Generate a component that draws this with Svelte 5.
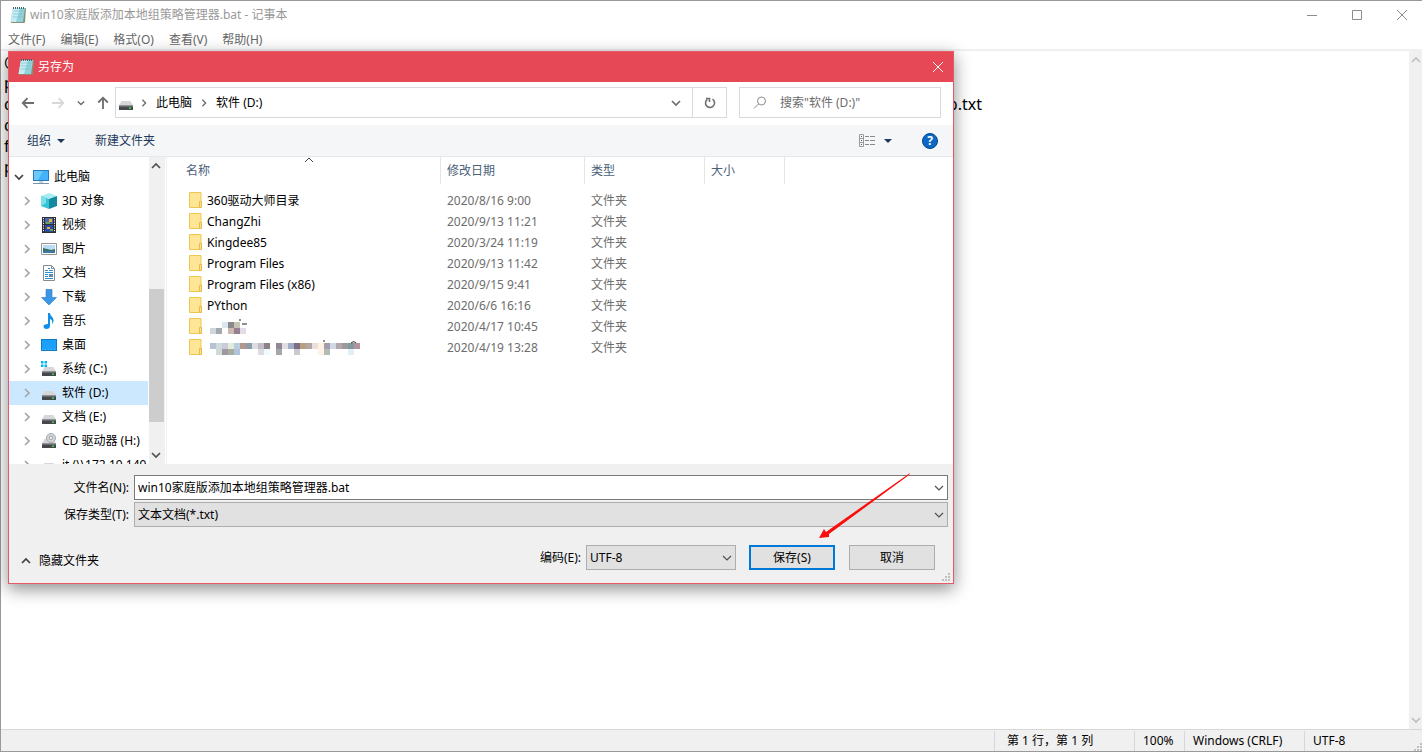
<script>
    let fileName = $state("win10家庭版添加本地组策略管理器.bat");
    let fileType = $state("文本文档(*.txt)");
    let encoding = $state("UTF-8");
    let selected = $state("软件 (D:)");

    const menus = ["文件(F)", "编辑(E)", "格式(O)", "查看(V)", "帮助(H)"];
    const status = ["第 1 行，第 1 列", "100%", "Windows (CRLF)", "UTF-8"];
    const lines = ["@", "p", "d", "d", "f", "p"];

    const places = [
        { icon: "cube", name: "3D 对象" },
        { icon: "video", name: "视频" },
        { icon: "picture", name: "图片" },
        { icon: "doc", name: "文档" },
        { icon: "download", name: "下载" },
        { icon: "music", name: "音乐" },
        { icon: "desktop", name: "桌面" },
        { icon: "system", name: "系统 (C:)" },
        { icon: "drive", name: "软件 (D:)" },
        { icon: "drive", name: "文档 (E:)" },
        { icon: "cd", name: "CD 驱动器 (H:)" },
        { icon: "drive", name: "it (\\\\172.19.149" },
    ];

    // hidden names are drawn as 6px blocks: [column, row, colour]
    const shortMosaic = [
        [0, 1, "#cfd6dc"], [1, 1, "#a3a8ae"], [2, 0, "#dce8f0"], [3, 0, "#8a8a8c"],
        [3, 1, "#cdb8b4"], [4, 0, "#c6c4b4"], [4, 1, "#958090"], [5, 1, "#e2dce8"],
    ];
    const longMosaic = [
        "#b8c4d4", "#d0dcdc", "#cccad8", "#e0ecdc", "#bccce0", "#b0988e", "#8c9caa", "#dedee0", "#c0bcc8", "#8e8288",
        "", "#928896", "#e0e0e4", "#a4acc8", "#7c6e84", "#ba9e7e", "#b0a8a4", "#ecdeda", "#fff2e4", "#a49cac",
        "#d2d8e4", "#b2a8b0", "#9e9a98", "#8498a0", "#b4949c",
    ]
        .map((c, i) => [i, 0, c])
        .filter((b) => b[2])
        .concat([
            [1, 1, "#d2dad8"], [2, 1, "#9c9aa0"], [3, 1, "#a8ac9e"], [4, 1, "#b0c2dc"], [8, 1, "#dedce2"],
            [9, 1, "#f0faff"], [11, 1, "#a4a8a6"], [14, 1, "#cacace"], [18, 1, "#fff2e4"], [19, 1, "#b4bcb4"],
            [23, 1, "#e2f0f6"],
        ]);

    const files = [
        { name: "360驱动大师目录", date: "2020/8/16 9:00" },
        { name: "ChangZhi", date: "2020/9/13 11:21" },
        { name: "Kingdee85", date: "2020/3/24 11:19" },
        { name: "Program Files", date: "2020/9/13 11:42" },
        { name: "Program Files (x86)", date: "2020/9/15 9:41" },
        { name: "PYthon", date: "2020/6/6 16:16" },
        { blocks: shortMosaic, marks: "M29 1h2M32 5h5", date: "2020/4/17 10:45" },
        { blocks: longMosaic, marks: "M113 1h2M141 3q3-3 5 0", date: "2020/4/19 13:28" },
    ];
</script>

{#snippet notepad()}
    <svg class="notepad" viewBox="0 0 16 18" width="16" height="18" aria-hidden="true">
        <path d="M4 2h12l-1 14.500-2 .5H1z" fill="#8f8b70" />
        <path d="M3 2h12l-2 14H0.500z" fill="#8ed3de" />
        <path d="M3 2h7L6 16H0.500z" fill="#c4edf2" />
        <path d="M3.500 5h10M3 8h10M2.500 11h10" stroke="#7cbac6" stroke-width=".6" />
        <path d="M3.500 1v2M5.500 1v2M7.500 1v2M9.500 1v2M11.500 1v2M13.500 1v2" stroke="#41666f" stroke-width="1" />
    </svg>
{/snippet}

{#snippet chevron(dir, size = 10)}
    <svg class="chevron {dir}" viewBox="0 0 10 10" width={size} height={size} aria-hidden="true">
        <path d="M1 3l4 4 4-4" fill="none" stroke="currentColor" stroke-width="var(--stroke, 1.700)" />
    </svg>
{/snippet}

{#snippet resizeGrip()}
    <svg class="grip" viewBox="0 0 8 8" width="8" height="8" aria-hidden="true">
        <path d="M6 0h2v2H6zM3 3h2v2H3zM6 3h2v2H6zM0 6h2v2H0zM3 6h2v2H3zM6 6h2v2H6z" fill="#bfbfbf" />
    </svg>
{/snippet}

{#snippet driveShape()}
    <path d="M3.500 6h9L15 10.500H1z" fill="#d6d7d9" />
    <path d="M1 10.500h14V15H1z" fill="#46494c" />
    <path d="M1 10.500h14v1H1z" fill="#8a8c8f" />
    <path d="M11 12.500h2v1.200h-2z" fill="#3df04a" />
{/snippet}

{#snippet icon(kind)}
    <svg class="icon" viewBox="0 0 16 16" width="16" height="16" aria-hidden="true">
        {#if kind === "pc"}
            <path d="M0 1h16v11H0z" fill="#2a7cb8" />
            <path d="M1 2h14v9H1z" fill="#43b4fb" />
            <path d="M1 2h9L5 11H1z" fill="#6cc8ff" />
            <path d="M6 12h4v2H6z" fill="#c5d3dc" />
            <path d="M0 14.500h16" stroke="#7893a5" />
        {:else if kind === "cube"}
            <path d="M0 3l8-3 8 3-8 3z" fill="#a5edf2" />
            <path d="M0 3l8 3v10l-8-3z" fill="#35c3d6" />
            <path d="M16 3l-8 3v10l8-3z" fill="#12899c" />
            <path d="M0 3l5 2v5l-5 3z" fill="#7bdfe9" />
        {:else if kind === "video"}
            <path d="M1 0h14v16H1z" fill="#2e2e30" />
            <path d="M4 1h8v6H4z" fill="#4a68b8" />
            <path d="M4 8h8v7H4z" fill="#2b4aa5" />
            <path d="M8 2h3v3H8zM6 10h3v2H6z" fill="#e7b33a" />
            <path d="M5 5h4v2H5zM9 12h3v2H9z" fill="#6ba34e" />
            <path d="M2.500 1v14M13.500 1v14" stroke="#f3f3f3" stroke-dasharray="1.200 1.200" />
        {:else if kind === "picture"}
            <path d="M.5 2.500h15v11H.5z" fill="#fff" stroke="#969696" />
            <path d="M2 4h12v8H2z" fill="#b8dcf5" />
            <path d="M2 7l4 1 4 1 4-1v4H2z" fill="#397065" />
            <path d="M2 10h12v2H2z" fill="#3b7ca6" />
        {:else if kind === "doc"}
            <path d="M2.500.5h8l3 3v12h-11z" fill="#fff" stroke="#858b90" />
            <path d="M10.500.5v3h3" fill="none" stroke="#858b90" />
            <path d="M7 3.500h2M4 5.500h3M8 5.500h4M4 7.500h8M4 9.500h3M4 11.500h3M4 13.500h8" stroke="#2e8fd0" />
            <path d="M8 9h4v3H8z" fill="#5d8fb0" />
        {:else if kind === "download"}
            <path d="M5 .5h6v8h4.500L8 16 .5 8.500H5z" fill="#3a96e6" stroke="#2b78c2" stroke-width=".6" />
        {:else if kind === "music"}
            <path d="M7 0h2c0 3 4 4 3.500 8-.2 1.400-.8 2.500-1.500 3 .8-3-.5-4.500-2-5v7c0 2-1.500 3-3.500 3S2.500 15 2.500 13.500 4 11 7 11z" fill="#0f8fe8" />
        {:else if kind === "desktop"}
            <path d="M0 2h16v12H0z" fill="#1277c4" />
            <path d="M1 3h14v10H1z" fill="#1ca0fb" />
            <path d="M1 12.500h14" stroke="#62c1ff" stroke-dasharray="1 2" />
        {:else if kind === "system"}
            {@render driveShape()}
            <path d="M0 0h2.500v2.500H0zM3.500 0H6v2.500H3.500zM0 3.500h2.500V6H0zM3.500 3.500H6V6H3.500z" fill="#00b4ee" />
        {:else if kind === "cd"}
            {@render driveShape()}
            <circle cx="10" cy="5" r="4.600" fill="#d0d3d5" stroke="#94989b" stroke-width=".7" />
            <circle cx="10" cy="5" r="1.600" fill="#fff" stroke="#888" stroke-width=".7" />
        {:else}
            {@render driveShape()}
        {/if}
    </svg>
{/snippet}

{#snippet mosaic(blocks, marks)}
    <svg class="mosaic" viewBox="0 0 150 16" width="150" height="16" role="img" aria-label="文件夹">
        {#each blocks as [col, row, fill]}
            <rect x={col * 6} y={row * 6 + 3} width="6" height="6" {fill} />
        {/each}
        <path d={marks} fill="none" stroke="#222" />
    </svg>
{/snippet}

<div class="window">
    <header class="titlebar">
        {@render notepad()}
        <h1>{fileName} - 记事本</h1>
        <div class="controls">
            <button aria-label="最小化"><svg viewBox="0 0 10 10" width="10" height="10"><path d="M0 5.500h10" /></svg></button>
            <button aria-label="最大化"><svg viewBox="0 0 10 10" width="10" height="10"><path d="M.5.5h9v9h-9z" /></svg></button>
            <button aria-label="关闭"><svg viewBox="0 0 10 10" width="10" height="10"><path d="M0 0l10 10M10 0L0 10" /></svg></button>
        </div>
    </header>

    <nav class="menubar">
        {#each menus as menu}
            <button>{menu}</button>
        {/each}
    </nav>

    <main class="workspace">
        <div class="editor">
            {#each lines as line, i}
                <p>
                    <span>{line}</span>
                    {#if i === 2}<span class="tail">p.txt</span>{/if}
                </p>
            {/each}
        </div>
        <div class="scrollbar page">
            {@render chevron("up")}
            {@render chevron("down")}
        </div>
    </main>

    <footer class="statusbar">
        {#each status as item}
            <span>{item}</span>
        {/each}
        {@render resizeGrip()}
    </footer>

    <section class="dialog" role="dialog" aria-label="另存为">
        <header class="dialog-title">
            {@render notepad()}
            <h2>另存为</h2>
            <button aria-label="关闭"><svg viewBox="0 0 10 10" width="10" height="10"><path d="M0 0l10 10M10 0L0 10" /></svg></button>
        </header>

        <div class="address-row">
            <div class="history">
                <button aria-label="后退"><svg viewBox="0 0 14 12" width="14" height="12"><path d="M13 6H2M6.500 1.200L1.700 6l4.800 4.800" /></svg></button>
                <button class="off" aria-label="前进"><svg viewBox="0 0 14 12" width="14" height="12"><path d="M1 6h11M7.500 1.200L12.300 6l-4.800 4.800" /></svg></button>
                <button class="recent" aria-label="最近浏览的位置">{@render chevron("down", 8)}</button>
                <button aria-label="上移"><svg viewBox="0 0 12 14" width="12" height="14"><path d="M6 13V2M1.200 6.500L6 1.700l4.800 4.800" /></svg></button>
            </div>
            <div class="address">
                {@render icon("drive")}
                {@render chevron("right", 8)}
                <a href="#pc">此电脑</a>
                {@render chevron("right", 8)}
                <a href="#d">软件 (D:)</a>
                <button class="drop" aria-label="上一个位置">{@render chevron("down")}</button>
                <button class="refresh" aria-label="刷新">
                    <svg viewBox="0 0 12 12" width="12" height="12">
                        <path d="M8.500 2.200A4.500 4.500 0 1 1 3.300 2.400M2 1.500h3.500V5" />
                    </svg>
                </button>
            </div>
            <label class="search">
                <svg viewBox="0 0 14 14" width="14" height="14"><circle cx="8.500" cy="5" r="4" /><path d="M5.500 8L1 12.500" /></svg>
                <input type="text" placeholder={'搜索"软件 (D:)"'} aria-label="搜索" />
            </label>
        </div>

        <div class="toolbar">
            <button>组织 <i class="caret"></i></button>
            <button>新建文件夹</button>
            <button class="view" aria-label="视图">
                <svg viewBox="0 0 16 13" width="16" height="13">
                    <path d="M.5.5h4v12h-4zM.5 4.500h4M.5 8.500h4" fill="none" stroke="#9a9a9a" />
                    <path d="M2 2.500h1M2 6.500h1M2 10.500h1" stroke="#555" />
                    <path d="M6 2.500h4M11 2.500h5M6 6.500h4M11 6.500h5M6 10.500h4M11 10.500h5" stroke="#8a8a8a" />
                </svg>
                <i class="caret"></i>
            </button>
            <button class="help" aria-label="帮助">?</button>
        </div>

        <div class="browser">
            <nav class="tree">
                <a class="root" href="#pc">
                    {@render chevron("down")}
                    {@render icon("pc")}
                    此电脑
                </a>
                {#each places as place}
                    <a href="#place" class:selected={place.name === selected} onclick={() => (selected = place.name)}>
                        {@render chevron("right")}
                        {@render icon(place.icon)}
                        {place.name}
                    </a>
                {/each}
            </nav>
            <div class="scrollbar">
                {@render chevron("up")}
                <div class="thumb"></div>
                {@render chevron("down")}
            </div>
            <div class="files">
                <table>
                    <thead>
                        <tr>
                            <th class="name">名称 {@render chevron("up")}</th>
                            <th class="date">修改日期</th>
                            <th class="type">类型</th>
                            <th class="size">大小</th>
                            <th class="rest"></th>
                        </tr>
                    </thead>
                    <tbody>
                        {#each files as file}
                            <tr>
                                <td>
                                    <div class="entry">
                                        <svg viewBox="0 0 14 18" width="14" height="18" aria-hidden="true">
                                            <path d="M.5.5h11.500v15H.5z" fill="#ffe596" stroke="#ecc850" />
                                            <path d="M10.500 9.500h2v6h-2z" fill="#fbdf8a" stroke="#e6bb48" />
                                        </svg>
                                        {#if file.name}{file.name}{:else}{@render mosaic(file.blocks, file.marks)}{/if}
                                    </div>
                                </td>
                                <td>{file.date}</td>
                                <td>文件夹</td>
                                <td></td>
                                <td></td>
                            </tr>
                        {/each}
                    </tbody>
                </table>
            </div>
        </div>

        <div class="form">
            <div class="field">
                <label for="file-name">文件名(N):</label>
                <div class="combo">
                    <input id="file-name" type="text" bind:value={fileName} />
                    {@render chevron("down")}
                </div>
            </div>
            <div class="field">
                <label for="file-type">保存类型(T):</label>
                <div class="combo">
                    <select id="file-type" bind:value={fileType}>
                        <option>文本文档(*.txt)</option>
                    </select>
                    {@render chevron("down")}
                </div>
            </div>
            <div class="actions">
                <button class="fold">{@render chevron("up")} 隐藏文件夹</button>
                <label for="encoding">编码(E):</label>
                <div class="combo encoding">
                    <select id="encoding" bind:value={encoding}>
                        <option>UTF-8</option>
                    </select>
                    {@render chevron("down")}
                </div>
                <button class="push primary">保存(S)</button>
                <button class="push">取消</button>
            </div>
            {@render resizeGrip()}
        </div>

        <svg class="pointer" viewBox="0 0 92 66" width="92" height="66" aria-hidden="true">
            <path d="M91 0L90 2 10 61 10 64 0 65 5 56 7 59z" fill="#fb0d0d" />
        </svg>
    </section>
</div>

<style>
    :global(body) {
        background: #fff;
        font: 12px/16px "Noto Sans", "Noto Sans CJK SC", sans-serif;
        color: #000;
    }

    * {
        box-sizing: border-box;
    }

    h1,
    h2,
    p {
        margin: 0;
        font-size: inherit;
        font-weight: normal;
    }

    button,
    input,
    select {
        margin: 0;
        padding: 0;
        border: 0;
        background: none;
        font: inherit;
        color: inherit;
    }

    a {
        color: inherit;
        text-decoration: none;
    }

    svg {
        display: block;
        flex: none;
    }

    .window {
        position: relative;
        display: flex;
        flex-direction: column;
        height: 100vh;
        min-height: 640px;
        border: 1px solid #999;
        border-right: 0;
    }

    .titlebar {
        display: flex;
        align-items: center;
        gap: 4px;
        height: 28px;
        padding-left: 9px;
        color: #999;
    }

    .controls {
        display: flex;
        gap: 4px;
        margin-left: auto;
    }

    .controls button {
        display: grid;
        place-items: center;
        width: 41px;
        height: 28px;
    }

    .controls path {
        fill: none;
        stroke: #8c8c8c;
    }

    .menubar {
        display: flex;
        gap: 15px;
        height: 22px;
        padding: 2px 0 0 7px;
        border-bottom: 2px solid #f0f0f0;
        color: #666;
    }

    .workspace {
        display: flex;
        flex: 1;
    }

    .editor {
        flex: 1;
        padding: 1px 3px;
        font-size: 16px;
        line-height: 21px;
    }

    .editor p {
        display: flex;
        height: 21px;
    }

    .tail {
        margin-left: 934px;
    }

    .scrollbar {
        display: flex;
        flex-direction: column;
        align-items: center;
        justify-content: space-between;
        width: 16px;
        padding: 4px 0;
        background: #f0f0f0;
        color: #505050;
    }

    .scrollbar.page {
        width: 13px;
        color: #bfbfbf;
    }

    .thumb {
        width: 15px;
        height: 133px;
        background: #cdcdcd;
    }

    .statusbar {
        display: flex;
        align-items: center;
        justify-content: flex-end;
        height: 22px;
        border-top: 1px solid #d7d7d7;
        background: #f0f0f0;
    }

    .statusbar span {
        height: 20px;
        padding: 2px 8px;
        border-left: 1px solid #d7d7d7;
    }

    .statusbar span:nth-child(1) {
        width: 140px;
        padding-left: 12px;
    }

    .statusbar span:nth-child(2) {
        width: 50px;
    }

    .statusbar span:nth-child(3) {
        width: 120px;
    }

    .statusbar span:nth-child(4) {
        width: 110px;
    }

    .statusbar .grip {
        align-self: flex-end;
    }

    .chevron.up {
        transform: rotate(180deg);
    }

    .chevron.right {
        transform: rotate(-90deg);
    }

    .dialog {
        position: absolute;
        top: 50px;
        left: 7px;
        right: 468px;
        min-width: 760px;
        border: 1px solid #e55a66;
        background: #fff;
        box-shadow: 0 5px 16px rgba(0, 0, 0, 0.45);
    }

    .dialog-title {
        display: flex;
        align-items: center;
        gap: 4px;
        height: 30px;
        padding-left: 9px;
        background: #e74856;
        color: #fff;
    }

    .dialog-title button {
        display: grid;
        place-items: center;
        width: 30px;
        height: 30px;
        margin-left: auto;
    }

    .dialog-title button path {
        fill: none;
        stroke: #fff;
    }

    .address-row {
        display: flex;
        align-items: center;
        height: 43px;
        padding: 0 12px 2px;
    }

    .history {
        display: flex;
        align-items: center;
        gap: 16px;
        width: 94px;
        color: #6d6d6d;
    }

    .history path {
        fill: none;
        stroke: currentColor;
        stroke-width: 1.8;
    }

    .history .off {
        color: #d8d8d8;
    }

    .history .recent {
        margin: 0 -4px;
    }

    .address,
    .search {
        display: flex;
        align-items: center;
        height: 31px;
        border: 1px solid #d9d9d9;
    }

    .address {
        flex: 1;
        gap: 8px;
        padding-left: 2px;
    }

    .address .icon {
        margin-right: -2px;
    }

    .address .chevron {
        color: #6d6d6d;
    }

    .address button {
        display: grid;
        place-items: center;
        height: 29px;
    }

    .drop {
        width: 32px;
        margin-left: auto;
    }

    .refresh {
        width: 34px;
        margin-left: -8px;
        border-left: 1px solid #d9d9d9;
    }

    .refresh path {
        fill: none;
        stroke: #707070;
        stroke-width: 1.6;
    }

    .search {
        width: 202px;
        margin-left: 12px;
        padding-left: 13px;
        gap: 13px;
    }

    .search circle,
    .search path {
        fill: none;
        stroke: #8a8a8a;
    }

    .search input {
        flex: 1;
        min-width: 0;
        outline: none;
    }

    .search input::placeholder {
        color: #6d6d6d;
        opacity: 1;
    }

    .toolbar {
        display: flex;
        align-items: center;
        gap: 30px;
        height: 32px;
        padding: 0 15px 0 18px;
        border-bottom: 1px solid #e6e7e8;
        background: #f5f6f7;
        color: #1e395b;
    }

    .toolbar button {
        display: flex;
        align-items: center;
        gap: 6px;
    }

    .caret {
        border: 4px solid transparent;
        border-top-color: #1e395b;
        border-bottom: 0;
    }

    .toolbar .view {
        gap: 9px;
        margin-left: auto;
    }

    .toolbar .help {
        justify-content: center;
        width: 16px;
        height: 16px;
        border: 1px solid #00478f;
        border-radius: 50%;
        background: #0c68c4;
        color: #fff;
        font-weight: bold;
    }

    .browser {
        display: flex;
        height: 307px;
    }

    .tree {
        width: 139px;
        margin-right: 1px;
        padding-top: 8px;
        overflow: hidden;
        white-space: nowrap;
    }

    .tree a {
        display: flex;
        align-items: center;
        gap: 5px;
        height: 24px;
        padding-left: 13px;
    }

    .tree .chevron {
        margin-right: 4px;
        color: #a6a6a6;
    }

    .tree .root {
        padding-left: 5px;
    }

    .tree .root .chevron {
        color: #404040;
    }

    .tree .selected {
        background: #cce8ff;
    }

    .browser .scrollbar {
        justify-content: flex-start;
        align-items: flex-start;
    }

    .browser .scrollbar .chevron {
        margin-left: 2px;
    }

    .browser .scrollbar .chevron:last-child {
        margin-top: auto;
    }

    .browser .thumb {
        margin-top: 118px;
    }

    .files {
        flex: 1;
        margin-left: 1px;
        border-left: 1px solid #f0f0f0;
    }

    table {
        width: 100%;
        table-layout: fixed;
        border-collapse: separate;
        border-spacing: 0;
    }

    th {
        position: relative;
        height: 27px;
        padding: 0 6px;
        border-right: 1px solid #e5e5e5;
        color: #4c607a;
        font-weight: normal;
        text-align: left;
    }

    th .chevron {
        --stroke: 1;
        position: absolute;
        top: -2px;
        left: 50%;
        color: #444;
    }

    th.name {
        width: 274px;
        padding-left: 19px;
    }

    th.date {
        width: 144px;
    }

    th.type {
        width: 120px;
    }

    th.size {
        width: 80px;
    }

    th.rest {
        border: 0;
    }

    tbody::before {
        display: block;
        height: 6px;
        content: "";
    }

    td {
        height: 21px;
        padding: 0 6px;
        color: #6d6d6d;
    }

    td:first-child {
        padding-left: 22px;
        color: #000;
    }

    .entry {
        display: flex;
        align-items: center;
        gap: 4px;
    }

    .mosaic {
        margin-left: 3px;
    }

    .form {
        position: relative;
        padding: 11px 5px 13px;
        background: #f0f0f0;
    }

    .field {
        display: flex;
        align-items: center;
        gap: 5px;
        margin-bottom: 2px;
    }

    .field label {
        width: 115px;
        text-align: right;
    }

    .combo {
        --stroke: 1.2;
        position: relative;
        flex: 1;
        height: 25px;
    }

    .combo input,
    .combo select {
        display: block;
        width: 100%;
        height: 100%;
        padding: 0 3px;
        border: 1px solid #adadad;
        border-radius: 0;
        background: #e1e1e1;
        appearance: none;
    }

    .combo input {
        padding-bottom: 2px;
        border-color: #7a7a7a;
        background: #fff;
    }

    .combo .chevron {
        position: absolute;
        top: 8px;
        right: 4px;
        color: #505050;
        pointer-events: none;
    }

    .actions {
        display: flex;
        align-items: center;
        margin-top: 18px;
        padding-right: 13px;
    }

    .fold {
        display: flex;
        align-items: center;
        gap: 8px;
        margin-right: auto;
        padding: 6px 0 0 7px;
    }

    .fold .chevron {
        color: #404040;
    }

    .combo.encoding {
        flex: none;
        width: 150px;
        margin: 0 13px 0 5px;
    }

    .push {
        width: 86px;
        height: 25px;
        border: 1px solid #adadad;
        background: #e1e1e1;
    }

    .push.primary {
        margin-right: 14px;
        border: 2px solid #0078d7;
    }

    .form .grip {
        position: absolute;
        right: 3px;
        bottom: 2px;
    }

    .pointer {
        position: absolute;
        right: 42px;
        bottom: 44px;
        pointer-events: none;
    }
</style>
